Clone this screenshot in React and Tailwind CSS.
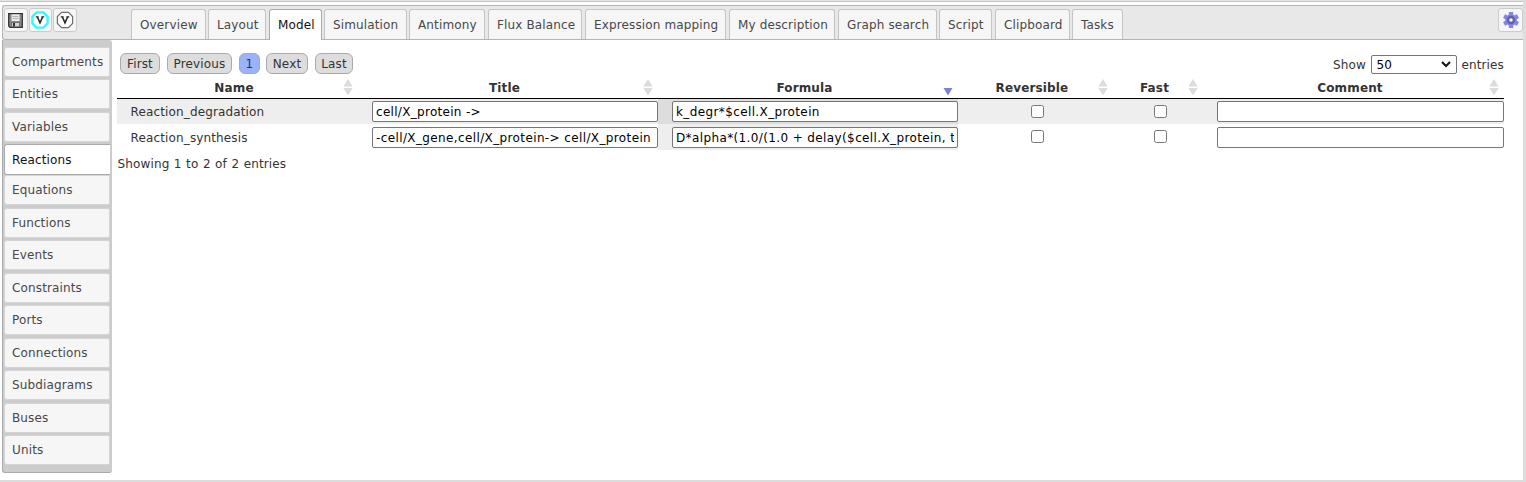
import React from "react";

const tabs = [
  ["Overview", "w-[75px]", "mr-[2px]"],
  ["Layout", "w-[58px]", "mr-[3px]"],
  ["Model", "w-[53px]", "mr-[2px]"],
  ["Simulation", "w-[83px]", "mr-[2px]"],
  ["Antimony", "w-[76px]", "mr-[3px]"],
  ["Flux Balance", "w-[94px]", "mr-[3px]"],
  ["Expression mapping", "w-[141px]", "mr-[3px]"],
  ["My description", "w-[106px]", "mr-[3px]"],
  ["Graph search", "w-[99px]", "mr-[2px]"],
  ["Script", "w-[53px]", "mr-[3px]"],
  ["Clipboard", "w-[75px]", "mr-[2px]"],
  ["Tasks", "w-[51px]", ""],
];

const sections = [
  ["Compartments", "h-[32px]"],
  ["Entities", "h-[33px]"],
  ["Variables", "h-[32px]"],
  ["Reactions", "h-[31px]"],
  ["Equations", "h-[33px]"],
  ["Functions", "h-[32px]"],
  ["Events", "h-[33px]"],
  ["Constraints", "h-[32px]"],
  ["Ports", "h-[33px]"],
  ["Connections", "h-[32px]"],
  ["Subdiagrams", "h-[33px]"],
  ["Buses", "h-[32px]"],
  ["Units", "h-[32px]"],
];

const pages = [
  ["First", "w-[40px]"],
  ["Previous", "w-[65px]"],
  ["1", "w-[21px]"],
  ["Next", "w-[42px] -ml-px"],
  ["Last", "w-[38px]"],
];

const columns = ["Name", "Title", "Formula", "Reversible", "Fast", "Comment"];
const grid = "grid grid-cols-[241px_300px_300px_155px_90px_301px]";

const rows = [
  ["Reaction_degradation", "cell/X_protein ->", "k_degr*$cell.X_protein"],
  ["Reaction_synthesis", "-cell/X_gene,cell/X_protein-> cell/X_protein", "D*alpha*(1.0/(1.0 + delay($cell.X_protein, tau)))"],
];

function SaveIcon() {
  return (
    <svg width="15" height="15" viewBox="0 0 15 15">
      <path d="M.7.7h13.6v13.6H2L.7 13z" fill="#8a8a8a" stroke="#333" strokeWidth="1.3" />
      <path d="M3.5 1.3h8V8h-8z" fill="#e8e8e8" />
      <path d="M4.5 3.5h6M4.5 5.5h6" stroke="#b5b5b5" />
      <path d="M3.5 9.5h8v4.3h-8z" fill="#d5d5d5" stroke="#555" strokeWidth=".7" />
      <path d="M5 10h2v3.5H5z" fill="#333" />
    </svg>
  );
}

function VersionIcon({ active }) {
  return (
    <svg width="18" height="18" viewBox="0 0 18 18" className="shrink-0">
      <path
        d="M5.6 1.4h6.8l4.2 4.2v6.8l-4.2 4.2H5.6l-4.2-4.2V5.6z"
        fill="#fff"
        stroke={active ? "#33f8ff" : "#6e6e6e"}
        strokeWidth={active ? 2.3 : 1.2}
      />
      <path d="M4.8 5.8h2.8M10.4 5.8h2.8" stroke="#222" strokeWidth="1.3" />
      <path d="M6.4 6L9 11.8 11.6 6" fill="none" stroke="#222" strokeWidth="1.5" />
    </svg>
  );
}

function GearIcon() {
  return (
    <svg width="16" height="16" viewBox="0 0 16 16">
      <g fill="#8585e6">
        <circle cx="8" cy="8" r="5.8" />
        <rect x="5.8" y="0" width="4.4" height="16" rx=".6" />
        <rect x="5.8" y="0" width="4.4" height="16" rx=".6" transform="rotate(60 8 8)" />
        <rect x="5.8" y="0" width="4.4" height="16" rx=".6" transform="rotate(120 8 8)" />
      </g>
      <circle cx="8" cy="8" r="3" fill="#f4f4ff" stroke="#6262a6" strokeWidth="2.4" />
    </svg>
  );
}

function ToolButton({ width = "w-[23.5px]", children }) {
  return (
    <button className={`${width} flex h-6 items-center justify-center rounded-[3px] border border-[#ccc] bg-[#f6f6f6]`}>
      {children}
    </button>
  );
}

function SortIcon({ sorted }) {
  return (
    <svg width="10" height="17" viewBox="0 0 10 17" className="shrink-0">
      {sorted ? (
        <path d="M.5 9h9L5 16.5z" fill="#7b80dd" />
      ) : (
        <path d="M.3 7.5h9.4L5 0zM.3 9h9.4L5 16.5z" fill="#dcdcdc" />
      )}
    </svg>
  );
}

function Field({ value, tracking = "tracking-[0.38px]" }) {
  return (
    <input
      readOnly
      value={value}
      className={`${tracking} block h-[21px] w-full rounded-[2px] border border-[#767676] bg-white px-[3px] text-[12px] text-black outline-none`}
    />
  );
}

function Check() {
  return <input type="checkbox" className="block size-[13px] appearance-none rounded-[2.5px] border border-[#767676] bg-white" />;
}

export default function App() {
  return (
    <div className="flex h-[482px] w-[1526px] flex-col overflow-hidden border-r-[3px] border-b-2 border-[#dcdcdc] bg-white font-['DejaVu_Sans',sans-serif] text-[12px] leading-4 tracking-[0.14px] text-[#333]">
      <div className="h-[2px] shrink-0 border-b border-[#c4c4c4] bg-[#e4e4e4]" />
      <header className="mt-[3px] ml-[2px] flex h-[35px] shrink-0 rounded-l-[3px] border-t border-b border-l border-[#b4b4b4] bg-[#e8e8e8]">
        <div className="ml-[1px] flex w-[127px] gap-[1px] pt-[2px]">
          <ToolButton><SaveIcon /></ToolButton>
          <ToolButton><VersionIcon active /></ToolButton>
          <ToolButton><VersionIcon /></ToolButton>
        </div>
        <nav className="flex pt-[3px]">
          {tabs.map(([name, width, gap]) => (
            <button
              key={name}
              className={`${width} ${gap} flex items-start rounded-t-[3px] border border-b-0 pt-[7px] pl-[8px] whitespace-nowrap ${
                name === "Model" ? "-mb-px border-[#aaa] bg-white text-[#111]" : "border-[#c4c4c4] bg-[#f6f6f6] text-[#484848]"
              }`}
            >
              {name}
            </button>
          ))}
        </nav>
        <div className="ml-auto pt-[2px]"><ToolButton width="w-[25px]"><GearIcon /></ToolButton></div>
      </header>
      <div className="flex">
        <aside className="ml-[2px] flex h-[433px] w-[110px] flex-col rounded-[3px] rounded-tl-none border-b border-l border-b-[#aaa] border-l-[#aaa] bg-[#ccc] pt-[7px] pr-[2px] pl-[1px]">
          {sections.map(([name, height]) => (
            <div key={name} className={`${height} shrink-0`}>
              <button
                className={`flex w-full items-center rounded-l-[3px] pl-[7px] ${
                  name === "Reactions"
                    ? "h-[31px] border-y border-l border-[#aaa] bg-white text-[#111]"
                    : "h-[30px] rounded-r-[2px] border border-[#d5d5d5] bg-[#f6f6f6] text-[#484848]"
                }`}
              >
                {name}
              </button>
            </div>
          ))}
        </aside>
        <main className="ml-[5px] w-[1387px] pt-[13px]">
          <div className="flex h-[24px] items-start justify-between">
            <div className="ml-[3px] flex gap-[7px]">
              {pages.map(([name, width]) => (
                <button
                  key={name}
                  className={`${width} flex h-[21px] items-center justify-center rounded-[6px] border border-[#aaa] ${
                    name === "1" ? "bg-[#99b3ff]" : "bg-[#ddd]"
                  }`}
                >
                  {name}
                </button>
              ))}
            </div>
            <label className="flex items-center pt-[2px]">
              Show
              <span className="mr-[4.5px] ml-[5px] flex h-[19px] w-[86px] items-center justify-between rounded-[2px] border border-[#767676] bg-white pr-[5px] pl-[4.5px] text-black">
                50
                <svg width="10" height="7" viewBox="0 0 10 7">
                  <path d="M1 1l4 4 4-4" fill="none" stroke="#111" strokeWidth="2" />
                </svg>
              </span>
              entries
            </label>
          </div>
          <div className={`${grid} h-[22px] border-b border-black`}>
            {columns.map((name) => (
              <div key={name} className="flex items-start pt-[2px] pr-[5px] pl-[11px] font-bold">
                <span className="flex-1 pt-px pr-[3px] text-center">{name}</span>
                <SortIcon sorted={name === "Formula"} />
              </div>
            ))}
          </div>
          {rows.map(([name, title, formula], i) => (
            <div key={name} className={`${grid} ${i === 0 ? "h-[25px] bg-[#eee]" : "h-[26px]"}`}>
              <div className={`pl-[13.5px] ${i === 0 ? "pt-[5px]" : "pt-[6px]"}`}>{name}</div>
              <div className={`pl-[14px] ${i === 0 ? "pt-[2px]" : "pt-[3px]"}`}>
                <Field value={title} tracking={i === 0 ? "tracking-[0.3px]" : "tracking-[0.38px]"} />
              </div>
              <div className={`pl-[14px] ${i === 0 ? "bg-[#ddd] pt-[2px]" : "bg-[#eee] pt-[3px]"}`}><Field value={formula} /></div>
              <div className="flex justify-center pt-[6px] pr-[10px] pl-[14px]"><Check /></div>
              <div className="flex justify-center pt-[6px] pr-[10px] pl-[14px]"><Check /></div>
              <div className={`pl-[14px] ${i === 0 ? "pt-[2px]" : "pt-[3px]"}`}><Field value="" /></div>
            </div>
          ))}
          <div className="pt-[6px] pl-[0.5px] [word-spacing:0.5px]">Showing 1 to 2 of 2 entries</div>
        </main>
      </div>
    </div>
  );
}
